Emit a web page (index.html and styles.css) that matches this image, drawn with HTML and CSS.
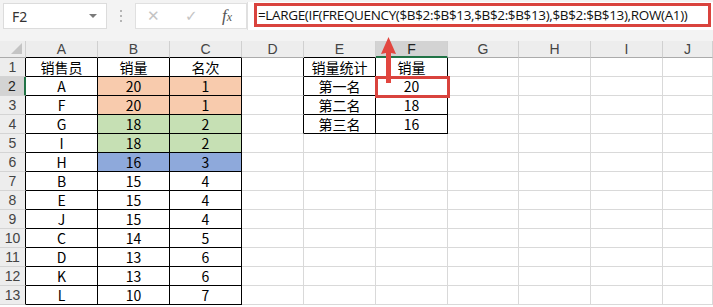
FILE: index.html
```html
<!DOCTYPE html>
<html lang="zh-CN">
<head>
  <meta charset="UTF-8">
  <title>销量排名</title>
  <link rel="stylesheet" href="styles.css">
</head>
<body>
  <div class="bar">
    <div class="namebox">F2<span class="drop"></span></div>
    <div class="dots"><i></i><i></i><i></i></div>
    <div class="btns">
      <span class="btn">✕</span>
      <span class="btn">✓</span>
      <span class="fx">f<small>x</small></span>
    </div>
    <div class="formula">
      <div class="mark">=LARGE(IF(FREQUENCY($B$2:$B$13,$B$2:$B$13),$B$2:$B$13),ROW(A1))</div>
    </div>
  </div>

  <div class="sheet">
    <!-- column headers -->
    <div class="hd corner"><span class="tri"></span></div>
    <div class="hd tt">A</div><div class="hd tt">B</div><div class="hd tt">C</div><div class="hd">D</div>
    <div class="hd tt">E</div><div class="hd sel-col">F</div><div class="hd">G</div><div class="hd">H</div><div class="hd">I</div><div class="hd">J</div>

    <div class="rh tl">1</div>
    <div class="c t">销售员</div><div class="c t">销量</div><div class="c t">名次</div><div class="c tl"></div>
    <div class="c t">销量统计</div><div class="c t">销量</div><div class="c"></div><div class="c"></div><div class="c"></div><div class="c"></div>

    <div class="rh sel-row">2</div>
    <div class="c t">A</div><div class="c t o">20</div><div class="c t o">1</div><div class="c tl"></div>
    <div class="c t">第一名</div><div class="c t active">20<span class="box"></span></div><div class="c"></div><div class="c"></div><div class="c"></div><div class="c"></div>

    <div class="rh tl">3</div>
    <div class="c t">F</div><div class="c t o">20</div><div class="c t o">1</div><div class="c tl"></div>
    <div class="c t">第二名</div><div class="c t">18</div><div class="c"></div><div class="c"></div><div class="c"></div><div class="c"></div>

    <div class="rh tl">4</div>
    <div class="c t">G</div><div class="c t g">18</div><div class="c t g">2</div><div class="c tl"></div>
    <div class="c t">第三名</div><div class="c t">16</div><div class="c"></div><div class="c"></div><div class="c"></div><div class="c"></div>

    <div class="rh tl">5</div>
    <div class="c t">I</div><div class="c t g">18</div><div class="c t g">2</div><div class="c"></div>
    <div class="c"></div><div class="c"></div><div class="c"></div><div class="c"></div><div class="c"></div><div class="c"></div>

    <div class="rh tl">6</div>
    <div class="c t">H</div><div class="c t b">16</div><div class="c t b">3</div><div class="c"></div>
    <div class="c"></div><div class="c"></div><div class="c"></div><div class="c"></div><div class="c"></div><div class="c"></div>

    <div class="rh tl">7</div>
    <div class="c t">B</div><div class="c t">15</div><div class="c t">4</div><div class="c"></div>
    <div class="c"></div><div class="c"></div><div class="c"></div><div class="c"></div><div class="c"></div><div class="c"></div>

    <div class="rh tl">8</div>
    <div class="c t">E</div><div class="c t">15</div><div class="c t">4</div><div class="c"></div>
    <div class="c"></div><div class="c"></div><div class="c"></div><div class="c"></div><div class="c"></div><div class="c"></div>

    <div class="rh tl">9</div>
    <div class="c t">J</div><div class="c t">15</div><div class="c t">4</div><div class="c"></div>
    <div class="c"></div><div class="c"></div><div class="c"></div><div class="c"></div><div class="c"></div><div class="c"></div>

    <div class="rh tl">10</div>
    <div class="c t">C</div><div class="c t">14</div><div class="c t">5</div><div class="c"></div>
    <div class="c"></div><div class="c"></div><div class="c"></div><div class="c"></div><div class="c"></div><div class="c"></div>

    <div class="rh tl">11</div>
    <div class="c t">D</div><div class="c t">13</div><div class="c t">6</div><div class="c"></div>
    <div class="c"></div><div class="c"></div><div class="c"></div><div class="c"></div><div class="c"></div><div class="c"></div>

    <div class="rh tl">12</div>
    <div class="c t">K</div><div class="c t">13</div><div class="c t">6</div><div class="c"></div>
    <div class="c"></div><div class="c"></div><div class="c"></div><div class="c"></div><div class="c"></div><div class="c"></div>

    <div class="rh tl">13</div>
    <div class="c t">L</div><div class="c t">10</div><div class="c t">7</div><div class="c"></div>
    <div class="c"></div><div class="c"></div><div class="c"></div><div class="c"></div><div class="c"></div><div class="c"></div>
  </div>

  <!-- annotation arrow pointing from F2 up to the formula bar -->
  <svg class="arrow" width="17" height="46" viewBox="0 0 17 46">
    <polygon points="8.5,0 16,17 11,16 11,46 6,46 6,16 1,17" fill="#e2463f"/>
  </svg>
</body>
</html>
```

FILE: styles.css
```css
body {
  margin: 0;
  position: relative;
  background: #fff;
  font-family: "Noto Sans CJK SC", "Noto Sans", sans-serif;
  overflow: hidden;
}

.bar {
  height: 41px;
  background: #f3f3f3;
  display: flex;
  align-items: flex-start;
  padding-top: 3px;
  box-sizing: border-box;
}

.namebox {
  margin-left: 3px;
  width: 104px;
  height: 26px;
  box-sizing: border-box;
  background: #fff;
  border: 1px solid #dcdcdc;
  display: flex;
  align-items: center;
  padding-left: 8px;
  font-size: 14px;
  color: #333;
  font-family: "Noto Sans", sans-serif;
}

.drop {
  margin-left: auto;
  margin-right: 9px;
  width: 0;
  height: 0;
  border-left: 4px solid transparent;
  border-right: 4px solid transparent;
  border-top: 4px solid #7a7a7a;
}

.dots {
  width: 28px;
  height: 26px;
  display: flex;
  flex-direction: column;
  align-items: center;
  justify-content: center;
  gap: 3px;
}

.dots i {
  width: 2px;
  height: 2px;
  background: #b5b5b5;
}

.btns {
  width: 112px;
  height: 26px;
  box-sizing: border-box;
  background: #fff;
  border: 1px solid #e0e0e0;
  display: flex;
  align-items: center;
  padding-left: 11px;
}

.btn {
  width: 38px;
  font-size: 15px;
  color: #c4c4c4;
  font-family: "DejaVu Sans", sans-serif;
}

.fx {
  font-family: "Liberation Serif", serif;
  font-style: italic;
  font-size: 17px;
  color: #555;
  margin-left: -1px;
}

.fx small {
  font-size: 12px;
}

.formula {
  flex: 1;
  height: 28px;
  margin-top: -1px;
  background: #fff;
  border-left: 1px solid #e0e0e0;
  padding: 1px 2px 0 6px;
  box-sizing: border-box;
}

.mark {
  height: 24px;
  box-sizing: border-box;
  border: 3px solid #d9433d;
  font-family: "Open Sans", sans-serif;
  font-size: 13.5px;
  letter-spacing: -0.35px;
  line-height: 18px;
  padding-left: 1px;
  color: #111;
  white-space: nowrap;
  overflow: hidden;
}

.sheet {
  display: grid;
  grid-template-columns: 26px 72px 72px 72px 62px 72px 72px 71px 72px 72px 1fr;
  grid-template-rows: 17px;
  grid-auto-rows: 19px;
}

.sheet > div {
  box-sizing: border-box;
  border-right: 1px solid #d9d9d9;
  border-bottom: 1px solid #d9d9d9;
  display: flex;
  align-items: center;
  justify-content: center;
  line-height: 16px;
}

.hd {
  background: #ededed;
  color: #444;
  font-size: 14px;
  font-family: "Liberation Sans", sans-serif;
  border-right-color: #d0d0d0 !important;
  border-bottom-color: #ababab !important;
}

.corner {
  align-items: flex-end !important;
  justify-content: flex-end !important;
  padding: 0 3px 3px 0;
}

.tri {
  width: 0;
  height: 0;
  border-left: 11px solid transparent;
  border-bottom: 11px solid #c4c4c4;
}

.rh {
  background: #ededed;
  color: #444;
  font-size: 14px;
  font-family: "Liberation Sans", sans-serif;
  border-bottom-color: #d4d4d4 !important;
  border-right-color: #ababab !important;
}

.c {
  font-size: 14px;
  color: #000;
}

.t {
  border-right-color: #000 !important;
  border-bottom-color: #000 !important;
}

.tl {
  border-right-color: #000 !important;
}

.tt {
  border-bottom-color: #000 !important;
}

.sel-col {
  background: #d3d3d3;
  color: #222;
  border-bottom: 2px solid #217346 !important;
}

.sel-row {
  background: #d3d3d3;
  color: #222;
  border-right: 2px solid #217346 !important;
}

.o { background: #f8cbad; }
.g { background: #c6e0b4; }
.b { background: #8ea9db; }

.active {
  position: relative;
}

.box {
  position: absolute;
  left: -1px;
  top: -1px;
  width: 75px;
  height: 22px;
  box-sizing: border-box;
  border: 3px solid #d9433d;
}

.arrow {
  position: absolute;
  left: 380px;
  top: 37px;
}
```
